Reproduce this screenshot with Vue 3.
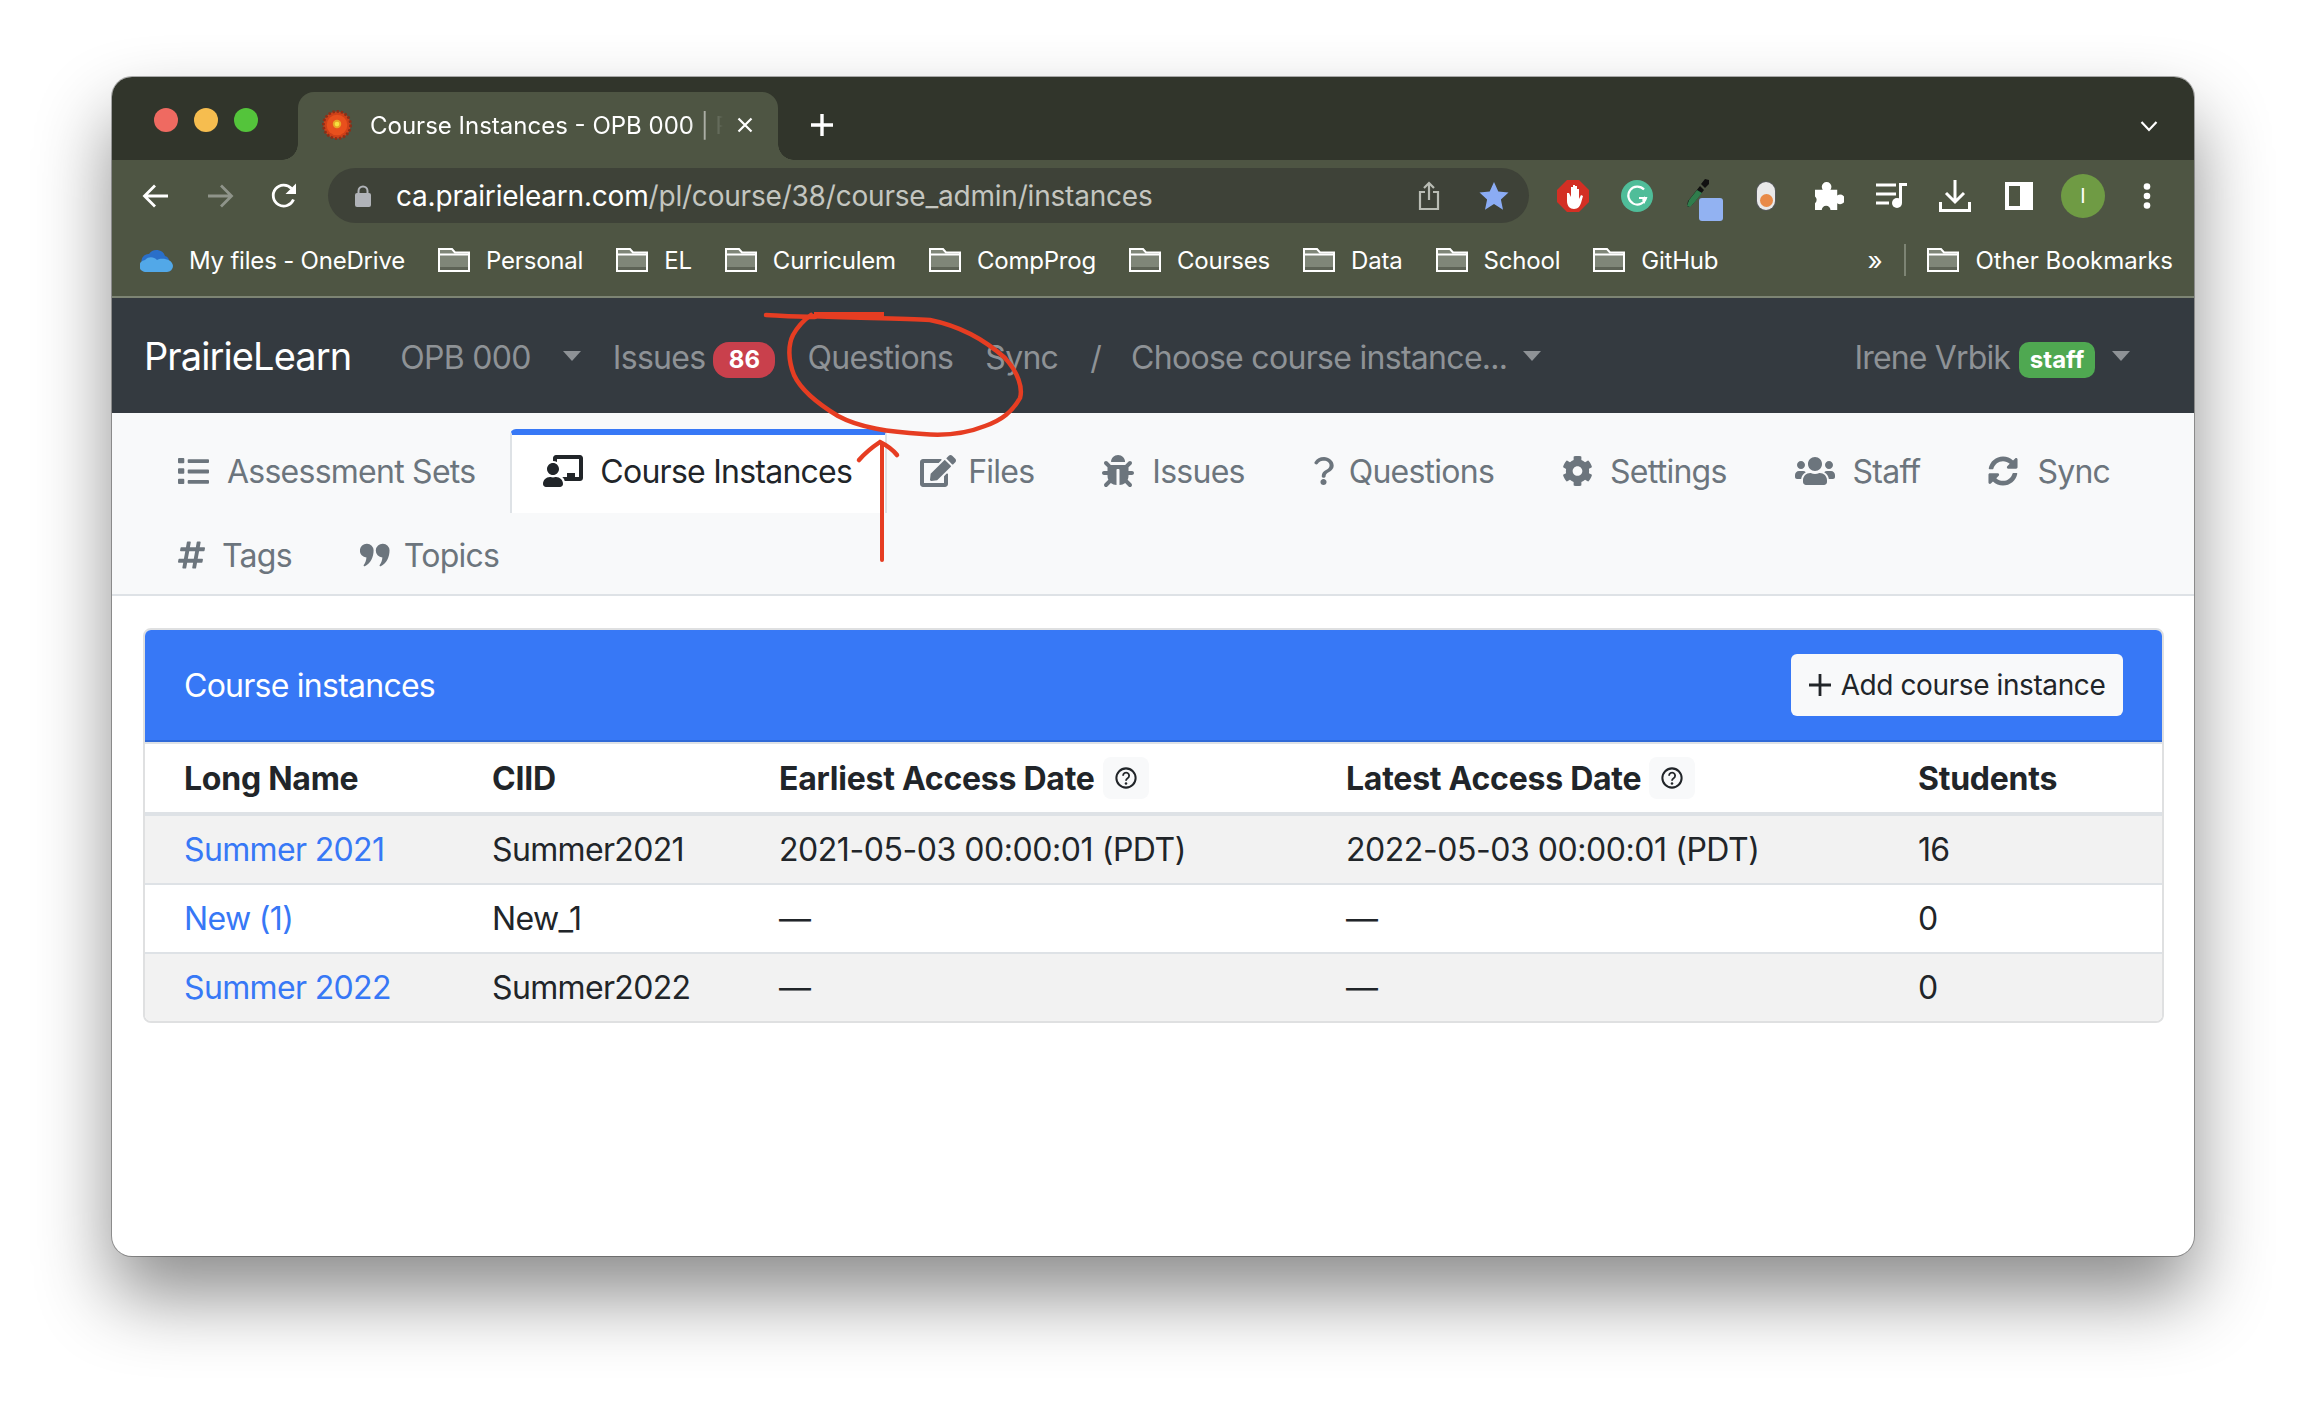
<script setup>
const icons = {
  list: { vb: '0 0 512 512', d: 'M16 40h72a16 16 0 0 1 16 16v56a16 16 0 0 1-16 16H16a16 16 0 0 1-16-16V56a16 16 0 0 1 16-16zm0 172h72a16 16 0 0 1 16 16v56a16 16 0 0 1-16 16H16a16 16 0 0 1-16-16v-56a16 16 0 0 1 16-16zm0 172h72a16 16 0 0 1 16 16v56a16 16 0 0 1-16 16H16a16 16 0 0 1-16-16v-56a16 16 0 0 1 16-16zM176 60h320a16 16 0 0 1 16 16v32a16 16 0 0 1-16 16H176a16 16 0 0 1-16-16V76a16 16 0 0 1 16-16zm0 172h320a16 16 0 0 1 16 16v32a16 16 0 0 1-16 16H176a16 16 0 0 1-16-16v-32a16 16 0 0 1 16-16zm0 172h320a16 16 0 0 1 16 16v32a16 16 0 0 1-16 16H176a16 16 0 0 1-16-16v-32a16 16 0 0 1 16-16z' },
  teacher: { vb: '0 0 640 512', d: 'M208 352c-2.39 0-4.78.35-7.06 1.09C187.98 357.3 174.35 360 160 360c-14.35 0-27.98-2.7-40.95-6.91-2.28-.74-4.66-1.09-7.05-1.09C49.94 352-.33 402.48 0 464.62.14 490.88 21.73 512 48 512h224c26.27 0 47.86-21.12 48-47.38.33-62.14-49.94-112.62-112-112.62zm-48-32c53.02 0 96-42.98 96-96s-42.98-96-96-96-96 42.98-96 96 42.98 96 96 96zM592 0H208c-26.47 0-48 22.25-48 49.59V96c23.42 0 45.1 6.78 64 17.8V64h352v288h-64v-64H384v64h-76.24c19.1 16.69 33.12 38.73 39.69 64H592c26.47 0 48-22.25 48-49.59V49.59C640 22.25 618.47 0 592 0z' },
  edit: { vb: '0 0 576 512', d: 'M402.6 83.2l90.2 90.2c3.8 3.8 3.8 10 0 13.8L274.4 405.6l-92.8 10.3c-12.4 1.4-22.9-9.1-21.5-21.5l10.3-92.8L388.8 83.2c3.8-3.8 10-3.8 13.8 0zm162-22.9l-48.8-48.8c-15.2-15.2-39.9-15.2-55.2 0l-35.4 35.4c-3.8 3.8-3.8 10 0 13.8l90.2 90.2c3.8 3.8 10 3.8 13.8 0l35.4-35.4c15.2-15.3 15.2-40 0-55.2zM384 346.2V448H64V128h229.8c3.2 0 6.2-1.3 8.5-3.5l40-40c7.6-7.6 2.2-20.5-8.5-20.5H48C21.5 64 0 85.5 0 112v352c0 26.5 21.5 48 48 48h352c26.5 0 48-21.5 48-48V306.2c0-10.7-12.9-16-20.5-8.5l-40 40c-2.2 2.3-3.5 5.3-3.5 8.5z' },
  bug: { vb: '0 0 512 512', d: 'M511.988 288.9c-.478 17.43-15.217 31.1-32.653 31.1H424v16c0 21.864-4.882 42.584-13.6 61.145l60.228 60.228c12.496 12.497 12.496 32.758 0 45.255-12.498 12.497-32.759 12.496-45.256 0l-54.736-54.736C345.886 467.965 314.351 480 280 480V236c0-6.627-5.373-12-12-12h-24c-6.627 0-12 5.373-12 12v244c-34.351 0-65.886-12.035-90.636-32.108l-54.736 54.736c-12.498 12.497-32.759 12.496-45.256 0-12.496-12.497-12.496-32.758 0-45.255l60.228-60.228C92.882 378.584 88 357.864 88 336v-16H32.666C15.23 320 .491 306.33.013 288.9-.484 270.816 14.028 256 32 256h56v-58.745l-46.628-46.628c-12.496-12.497-12.496-32.758 0-45.255 12.498-12.497 32.758-12.497 45.256 0L141.255 160h229.489l54.627-54.627c12.498-12.497 32.758-12.497 45.256 0 12.496 12.497 12.496 32.758 0 45.255L424 197.255V256h56c17.972 0 32.484 14.816 31.988 32.9zM257 0c-61.856 0-112 50.144-112 112h224C369 50.144 318.856 0 257 0z' },
  question: { vb: '0 0 384 512', d: 'M202 0C122 0 70 33 30 91c-7 11-5 25 5 33l14 10c10 8 25 6 33-4 25-31 48-60 120-60 56 0 101 32 101 84 0 42-30 62-66 84-42 25-77 50-77 110v6c0 13 11 24 24 24h22c13 0 24-11 24-24v-4c0-36 22-50 56-72 42-26 92-58 92-124C378 66 287 0 202 0zM192 400c-31 0-56 25-56 56s25 56 56 56 56-25 56-56-25-56-56-56z' },
  cog: { vb: '0 0 512 512', d: 'M487.4 315.7l-42.6-24.6c4.3-23.2 4.3-47 0-70.2l42.6-24.6c4.9-2.8 7.1-8.6 5.5-14-11.1-35.6-30-67.8-54.7-94.6-3.8-4.1-10-5.1-14.8-2.3L380.8 110c-17.9-15.4-38.5-27.3-60.8-35.1V25.8c0-5.6-3.9-10.5-9.4-11.7-36.7-8.2-74.3-7.8-109.2 0-5.5 1.2-9.4 6.1-9.4 11.7V75c-22.2 7.9-42.8 19.8-60.8 35.1L88.7 85.5c-4.9-2.8-11-1.9-14.8 2.3-24.7 26.7-43.6 58.9-54.7 94.6-1.7 5.4.6 11.2 5.5 14L67.3 221c-4.3 23.2-4.3 47 0 70.2l-42.6 24.6c-4.9 2.8-7.1 8.6-5.5 14 11.1 35.6 30 67.8 54.7 94.6 3.8 4.1 10 5.1 14.8 2.3l42.6-24.6c17.9 15.4 38.5 27.3 60.8 35.1v49.2c0 5.6 3.9 10.5 9.4 11.7 36.7 8.2 74.3 7.8 109.2 0 5.5-1.2 9.4-6.1 9.4-11.7v-49.2c22.2-7.9 42.8-19.8 60.8-35.1l42.6 24.6c4.9 2.8 11 1.9 14.8-2.3 24.7-26.7 43.6-58.9 54.7-94.6 1.5-5.5-.7-11.3-5.6-14.1zM256 336c-44.1 0-80-35.9-80-80s35.9-80 80-80 80 35.9 80 80-35.9 80-80 80z' },
  users: { vb: '0 0 640 512', d: 'M96 224c35.3 0 64-28.7 64-64s-28.7-64-64-64-64 28.7-64 64 28.7 64 64 64zm448 0c35.3 0 64-28.7 64-64s-28.7-64-64-64-64 28.7-64 64 28.7 64 64 64zm32 32h-64c-17.6 0-33.5 7.1-45.1 18.6 40.3 22.1 68.9 62 75.1 109.4h66c17.7 0 32-14.3 32-32v-32c0-35.3-28.7-64-64-64zm-256 0c61.9 0 112-50.1 112-112S381.9 32 320 32 208 82.1 208 144s50.1 112 112 112zm76.8 32h-8.3c-20.8 10-43.9 16-68.5 16s-47.6-6-68.5-16h-8.3C179.6 288 128 339.6 128 403.2V432c0 26.5 21.5 48 48 48h288c26.5 0 48-21.5 48-48v-28.8c0-63.6-51.6-115.2-115.2-115.2zm-223.7-13.4C161.5 263.1 145.6 256 128 256H64c-35.3 0-64 28.7-64 64v32c0 17.7 14.3 32 32 32h65.9c6.3-47.4 34.9-87.3 75.2-109.4z' },
  sync: { vb: '0 0 512 512', d: 'M370.72 133.28C339.458 104.008 298.888 87.962 255.848 88c-77.458.068-144.328 53.178-162.791 126.85-1.344 5.363-6.122 9.15-11.651 9.15H24.103c-7.498 0-13.194-6.807-11.807-14.176C33.933 94.924 134.813 8 256 8c66.448 0 126.791 26.136 171.315 68.685L463.03 40.97C478.149 25.851 504 36.559 504 57.941V192c0 13.255-10.745 24-24 24H345.941c-21.382 0-32.09-25.851-16.971-40.971l41.75-41.749zM32 296h134.059c21.382 0 32.09 25.851 16.971 40.971l-41.75 41.75c31.262 29.273 71.835 45.319 114.876 45.28 77.418-.07 144.315-53.144 162.787-126.849 1.344-5.363 6.122-9.15 11.651-9.15h57.304c7.498 0 13.194 6.807 11.807 14.176C478.067 417.076 377.187 504 256 504c-66.448 0-126.791-26.136-171.315-68.685L48.97 471.03C33.851 486.149 8 475.441 8 454.059V320c0-13.255 10.745-24 24-24z' },
  hash: { vb: '0 0 448 512', d: 'M440.667 182.109l7.143-40c1.313-7.355-4.342-14.109-11.813-14.109h-74.81l14.623-81.891C377.123 38.754 371.468 32 363.997 32h-40.632a12 12 0 0 0-11.813 9.891L296.175 128H197.54l14.623-81.891C213.477 38.754 207.822 32 200.35 32h-40.632a12 12 0 0 0-11.813 9.891L132.528 128H53.432a12 12 0 0 0-11.813 9.891l-7.143 40C33.163 185.246 38.818 192 46.289 192h74.81L98.242 320H19.146a12 12 0 0 0-11.813 9.891l-7.143 40C-1.123 377.246 4.532 384 12.003 384h74.81L72.19 465.891C70.877 473.246 76.532 480 84.003 480h40.632a12 12 0 0 0 11.813-9.891L151.826 384h98.634l-14.623 81.891C234.523 473.246 240.178 480 247.65 480h40.632a12 12 0 0 0 11.813-9.891L315.472 384h79.096a12 12 0 0 0 11.813-9.891l7.143-40c1.313-7.355-4.342-14.109-11.813-14.109h-74.81l22.857-128h79.096a12 12 0 0 0 11.813-9.891zM261.889 320h-98.634l22.857-128h98.634l-22.857 128z' },
  quote: { vb: '0 0 512 512', d: 'M120 64a112 112 0 0 1 112 112c0 120-50 220-150 272a14 14 0 0 1-18-20c24-34 42-76 46-130A112 112 0 0 1 120 64zm272 0a112 112 0 0 1 112 112c0 120-50 220-150 272a14 14 0 0 1-18-20c24-34 42-76 46-130a112 112 0 0 1 10-234z' },
}

const tabs = [
  { label: 'Assessment Sets', icon: 'list', w: 31, gap: 18 },
  { label: 'Course Instances', icon: 'teacher', w: 40, gap: 17, active: true },
  { label: 'Files', icon: 'edit', w: 36, gap: 12 },
  { label: 'Issues', icon: 'bug', w: 32, gap: 18 },
  { label: 'Questions', icon: 'question', w: 21, gap: 15 },
  { label: 'Settings', icon: 'cog', w: 31, gap: 17 },
  { label: 'Staff', icon: 'users', w: 40, gap: 18 },
  { label: 'Sync', icon: 'sync', w: 30, gap: 19 },
  { label: 'Tags', icon: 'hash', w: 27, gap: 17 },
  { label: 'Topics', icon: 'quote', w: 30, gap: 14 },
]

const bookmarks = ['Personal', 'EL', 'Curriculem', 'CompProg', 'Courses', 'Data', 'School', 'GitHub']

const rows = [
  { name: 'Summer 2021', ciid: 'Summer2021', early: '2021-05-03 00:00:01 (PDT)', late: '2022-05-03 00:00:01 (PDT)', students: 16 },
  { name: 'New (1)', ciid: 'New_1', early: '—', late: '—', students: 0 },
  { name: 'Summer 2022', ciid: 'Summer2022', early: '—', late: '—', students: 0 },
]
</script>

<template>
  <div class="page">
    <div class="window">
      <div class="tabstrip">
        <div class="lights">
          <span class="light red"></span>
          <span class="light yellow"></span>
          <span class="light green"></span>
        </div>
        <div class="browser-tab">
          <svg class="favicon" viewBox="0 0 32 32" width="30" height="32">
            <circle cx="16" cy="16" r="14.500" fill="#cf4018" stroke="#8a2f18" stroke-width="3" stroke-dasharray="2.500 2" />
            <circle cx="16" cy="16" r="11" fill="#e8501d" />
            <circle cx="16" cy="15" r="4.500" fill="#e8a625" />
            <circle cx="16" cy="15" r="2.500" fill="#f6e23f" />
          </svg>
          <span class="tab-title">Course Instances - OPB 000 | PrairieLearn</span>
          <svg class="tab-close" viewBox="0 0 16 16" width="16" height="16">
            <path d="M1.500 1.500l13 13M14.500 1.500l-13 13" stroke="#fff" stroke-width="2.200" fill="none" />
          </svg>
        </div>
        <svg class="new-tab" viewBox="0 0 24 24" width="24" height="24">
          <path d="M12 1v22M1 12h22" stroke="#fff" stroke-width="3.400" fill="none" />
        </svg>
        <svg class="tab-menu" viewBox="0 0 18 12" width="18" height="12">
          <path d="M1.500 2l7.500 8 7.500-8" stroke="#fff" stroke-width="2.200" fill="none" />
        </svg>
      </div>

      <div class="toolbar">
        <svg class="tool-nav" viewBox="0 0 28 28" width="28" height="28">
          <path d="M26 14H3M13 3.500L2.500 14 13 24.500" stroke="#fff" stroke-width="2.800" fill="none" />
        </svg>
        <svg class="tool-nav" viewBox="0 0 28 28" width="28" height="28">
          <path d="M2 14h23M15 3.500L25.500 14 15 24.500" stroke="#8f948a" stroke-width="2.800" fill="none" />
        </svg>
        <svg class="tool-nav" viewBox="0 0 28 28" width="28" height="28">
          <path d="M23.500 17.500A10.500 10.500 0 1 1 21.500 6.500" stroke="#fff" stroke-width="2.800" fill="none" />
          <path d="M26 1.500V12H15.500z" fill="#fff" />
        </svg>
        <div class="omnibox">
          <svg class="lock" viewBox="0 0 16 22" width="16" height="22">
            <path d="M3.500 9V6a4.500 4.500 0 0 1 9 0v3" stroke="#b0b3b8" stroke-width="2" fill="none" />
            <rect x="0" y="8" width="16" height="14" rx="2" fill="#b0b3b8" />
          </svg>
          <span class="url"><span class="url-host">ca.prairielearn.com</span>/pl/course/38/course_admin/instances</span>
          <svg class="share" viewBox="0 0 22 30" width="22" height="30">
            <path d="M11 19V2M6 7l5-5 5 5M7 11H2v17h18V11h-5" stroke="#b9bcb4" stroke-width="2.200" fill="none" />
          </svg>
          <svg class="star" viewBox="0 0 30 30" width="30" height="30">
            <path d="M15 1l4.300 9.500 10.200 1.100-7.600 6.900 2.100 10.200L15 23l-9 5.700 2.100-10.200L.5 11.600l10.200-1.100z" fill="#8bacf4" />
          </svg>
        </div>
        <div class="extensions">
          <svg viewBox="0 0 32 32" width="32" height="32">
            <path d="M10 0h12l10 10v12L22 32H10L0 22V10z" fill="#d32f24" />
            <path d="M10 13v8c0 5 3 8 7 8s6-3 7-6l2-7-2-1-2 4V9h-2v6V6h-2v9V5h-2v10V7h-2v10l-2-4z" fill="#fff" />
          </svg>
          <svg viewBox="0 0 32 32" width="32" height="32">
            <circle cx="16" cy="16" r="16" fill="#4fbd99" />
            <path d="M23 9.500A9 9 0 1 0 25 18h-7" stroke="#fff" stroke-width="2.200" fill="none" />
            <path d="M24 16v8l-3-4z" fill="#fff" />
          </svg>
          <div class="picker">
            <svg viewBox="0 0 26 30" width="26" height="30">
              <path d="M24 1l-4-1-4 5 4 4 4-4zM15 7L3 22l-1 5 2 1 4-3L19 11z" fill="#111" />
              <path d="M12 11L4 21l-2 6 3 1 4-4 8-10z" fill="#2f7d4c" />
            </svg>
            <span class="picker-swatch"></span>
          </div>
          <span class="toggle"><span class="toggle-dot"></span></span>
          <svg class="puzzle" viewBox="0 0 30 29" width="29" height="28">
            <path d="M0 8h8a5 5 0 0 1-1-3 5 5 0 0 1 10 0 5 5 0 0 1-1 3h7v6a5 5 0 0 1 3-1 5 5 0 0 1 0 10 5 5 0 0 1-3-1v7h-7a4.500 4.500 0 0 0-9 0H0v-7a4.500 4.500 0 0 0 0-7z" fill="#fff" />
          </svg>
          <svg viewBox="0 0 31 25" width="31" height="25">
            <path d="M0 2h20M0 11h20M0 20h13" stroke="#fff" stroke-width="3" fill="none" />
            <path d="M24.500 20V1.500h6.500" stroke="#fff" stroke-width="3" fill="none" />
            <ellipse cx="21" cy="20" rx="5" ry="5" fill="#fff" />
          </svg>
          <svg class="download" viewBox="0 0 32 32" width="32" height="32">
            <path d="M16 0v22M7 13l9 9 9-9M1.500 22v8.500h29V22" stroke="#fff" stroke-width="3" fill="none" />
          </svg>
          <svg class="panel" viewBox="0 0 28 28" width="28" height="28">
            <rect x="2" y="2" width="24" height="24" fill="none" stroke="#fff" stroke-width="4" />
            <rect x="15" y="2" width="11" height="24" fill="#fff" />
          </svg>
          <span class="avatar">I</span>
          <svg class="dots" viewBox="0 0 8 26" width="8" height="26">
            <circle cx="4" cy="3.500" r="3.300" fill="#fff" />
            <circle cx="4" cy="13" r="3.300" fill="#fff" />
            <circle cx="4" cy="22.500" r="3.300" fill="#fff" />
          </svg>
        </div>
      </div>

      <div class="bookmarks">
        <div class="bookmark">
          <svg viewBox="0 0 33 24" width="33" height="24">
            <path d="M8 20a7 7 0 0 1 1-14 9 9 0 0 1 16 2 5 5 0 0 1-2 10z" fill="#2a6fc9" />
            <path d="M6 24a6 6 0 0 1-1-12c4-4 9-3 12 0 4-3 16-1 16 6a6 6 0 0 1-6 6z" fill="#52a8e8" />
          </svg>
          <span>My files - OneDrive</span>
        </div>
        <div v-for="b in bookmarks" :key="b" class="bookmark">
          <svg class="folder" viewBox="0 0 32 24" width="32" height="24">
            <path d="M1 23V1h13l3 3.500h14V23z" fill="#7f8678" stroke="#fff" stroke-width="2" />
            <path d="M2 6.500h28" stroke="#fff" stroke-width="2" />
            <path d="M2 19h28v3H2z" fill="#5d6356" />
          </svg>
          <span>{{ b }}</span>
        </div>
        <span class="chevrons">»</span>
        <span class="bm-sep"></span>
        <div class="bookmark">
          <svg class="folder" viewBox="0 0 32 24" width="32" height="24">
            <path d="M1 23V1h13l3 3.500h14V23z" fill="#7f8678" stroke="#fff" stroke-width="2" />
            <path d="M2 6.500h28" stroke="#fff" stroke-width="2" />
            <path d="M2 19h28v3H2z" fill="#5d6356" />
          </svg>
          <span>Other Bookmarks</span>
        </div>
      </div>

      <nav class="navbar">
        <span class="brand">PrairieLearn</span>
        <span class="nav-item course">OPB 000</span>
        <span class="caret caret-course"></span>
        <span class="nav-item issues">Issues</span>
        <span class="badge danger">86</span>
        <span class="nav-item questions">Questions</span>
        <span class="nav-item sync">Sync</span>
        <span class="nav-item slash">/</span>
        <span class="nav-item choose">Choose course instance...</span>
        <span class="caret caret-choose"></span>
        <div class="nav-right">
          <span class="nav-item">Irene Vrbik</span>
          <span class="badge success">staff</span>
          <span class="caret caret-user"></span>
        </div>
      </nav>

      <div class="subtabs">
        <a v-for="t in tabs" :key="t.label" class="subtab" :class="{ active: t.active }">
          <svg class="subtab-icon" :viewBox="icons[t.icon].vb" :width="t.w" :height="32" :style="{ marginRight: t.gap + 'px' }">
            <path :d="icons[t.icon].d" fill="currentColor" />
          </svg>
          <span>{{ t.label }}</span>
        </a>
      </div>

      <main class="content">
        <section class="card">
          <header class="card-header">
            <span class="card-title">Course instances</span>
            <button class="add-btn">
              <svg viewBox="0 0 22 22" width="22" height="22">
                <path d="M11 0v22M0 11h22" stroke="#212529" stroke-width="2.800" fill="none" />
              </svg>
              <span>Add course instance</span>
            </button>
          </header>
          <table class="table">
            <colgroup>
              <col class="c1" /><col class="c2" /><col class="c3" /><col class="c4" /><col />
            </colgroup>
            <thead>
              <tr>
                <th>Long Name</th>
                <th>CIID</th>
                <th>
                  <span class="th-flex">Earliest Access Date
                    <span class="help"><svg viewBox="0 0 24 24" width="22" height="22"><circle cx="12" cy="12" r="10.500" fill="none" stroke="#212529" stroke-width="2.200" /><path d="M8.800 9.500a3.300 3.300 0 1 1 5 2.800c-1.200.8-1.800 1.400-1.800 2.700" fill="none" stroke="#212529" stroke-width="2" /><circle cx="12" cy="18" r="1.400" fill="#212529" /></svg></span>
                  </span>
                </th>
                <th>
                  <span class="th-flex">Latest Access Date
                    <span class="help"><svg viewBox="0 0 24 24" width="22" height="22"><circle cx="12" cy="12" r="10.500" fill="none" stroke="#212529" stroke-width="2.200" /><path d="M8.800 9.500a3.300 3.300 0 1 1 5 2.800c-1.200.8-1.800 1.400-1.800 2.700" fill="none" stroke="#212529" stroke-width="2" /><circle cx="12" cy="18" r="1.400" fill="#212529" /></svg></span>
                  </span>
                </th>
                <th>Students</th>
              </tr>
            </thead>
            <tbody>
              <tr v-for="r in rows" :key="r.name">
                <td><a class="link">{{ r.name }}</a></td>
                <td>{{ r.ciid }}</td>
                <td class="date">{{ r.early }}</td>
                <td class="date">{{ r.late }}</td>
                <td>{{ r.students }}</td>
              </tr>
            </tbody>
          </table>
        </section>
      </main>
    </div>

    <svg class="annotation" viewBox="0 0 2306 1404" width="2306" height="1404">
      <path d="M810 316C850 318 900 318 930 320C960 326 985 340 1005 358C1018 372 1023 388 1020 398C1012 412 1002 420 985 426C965 434 945 436 923 434C890 432 860 428 838 416C815 402 800 388 794 375C788 360 788 345 793 335C798 326 804 320 811 315" fill="none" stroke="#e63d22" stroke-width="4.500" stroke-linecap="round" />
      <path d="M766 315C785 316 800 317 815 317" stroke="#e63d22" stroke-width="4.500" fill="none" stroke-linecap="round" />
      <path d="M814 315L884 315" stroke="#e63d22" stroke-width="6" fill="none" />
      <path d="M882 560V444" stroke="#e63d22" stroke-width="4" fill="none" stroke-linecap="round" />
      <path d="M859 460C866 452 874 446 880 442C888 446 893 450 897 455" stroke="#e63d22" stroke-width="4.500" fill="none" stroke-linecap="round" />
    </svg>
  </div>
</template>

<style>
html, body { margin: 0; background: #fff; }
</style>

<style scoped>
.page {
  position: relative;
  width: 2306px;
  height: 1404px;
  box-sizing: border-box;
  padding: 77px 112px 148px;
  background: #fff;
  overflow: hidden;
  font-family: Inter, "Liberation Sans", sans-serif;
}
.window {
  height: 100%;
  display: flex;
  flex-direction: column;
  background: #fff;
  border-radius: 20px;
  overflow: hidden;
  box-shadow: 0 0 0 1px rgba(0, 0, 0, .3), 0 40px 75px rgba(0, 0, 0, .45);
}

.tabstrip {
  flex: none;
  height: 83px;
  background: #31352b;
  display: flex;
  align-items: flex-start;
  position: relative;
}
.lights { display: flex; gap: 16px; padding: 31px 0 0 42px; width: 186px; box-sizing: border-box; }
.light { width: 24px; height: 24px; border-radius: 50%; flex: none; }
.red { background: #ef6a61; }
.yellow { background: #f6bd4f; }
.green { background: #54c43b; }
.browser-tab {
  position: relative;
  margin-top: 15px;
  width: 480px;
  height: 68px;
  background: #4e5543;
  border-radius: 16px 16px 0 0;
  display: flex;
  align-items: center;
  padding: 0 25px 2px 24px;
  box-sizing: border-box;
}
.browser-tab::before,
.browser-tab::after {
  content: "";
  position: absolute;
  bottom: 0;
  width: 16px;
  height: 16px;
}
.browser-tab::before { left: -16px; background: radial-gradient(circle at 0 0, #31352b 15.5px, #4e5543 16px); }
.browser-tab::after { right: -16px; background: radial-gradient(circle at 100% 0, #31352b 15.5px, #4e5543 16px); }
.favicon { flex: none; margin-right: 18px; }
.tab-title {
  flex: 1;
  min-width: 0;
  white-space: nowrap;
  overflow: hidden;
  color: #fff;
  font-size: 24px;
  -webkit-mask-image: linear-gradient(90deg, #000 90%, transparent 100%);
  mask-image: linear-gradient(90deg, #000 90%, transparent 100%);
}
.tab-close { flex: none; margin-left: 14px; }
.new-tab { margin: 36px 0 0 32px; flex: none; }
.tab-menu { margin: 43px 36px 0 auto; flex: none; }

.toolbar {
  flex: none;
  height: 73px;
  box-sizing: border-box;
  padding: 8px 0 0 30px;
  background: #4e5543;
  display: flex;
  align-items: flex-start;
}
.tool-nav { flex: none; margin: 14px 36px 0 0; }
.omnibox {
  margin-left: -6px;
  width: 1201px;
  height: 55px;
  flex: none;
  border-radius: 28px;
  background: #3e4238;
  display: flex;
  align-items: center;
  padding: 0 20px 0 27px;
  box-sizing: border-box;
}
.lock { flex: none; margin-right: 25px; }
.url { flex: 1; color: #c4c6c0; font-size: 28px; white-space: nowrap; letter-spacing: -.2px; }
.url-host { color: #fff; }
.share { flex: none; margin-right: 39px; }
.star { flex: none; }
.extensions {
  display: flex;
  align-items: center;
  margin: 0 0 0 28px;
  height: 55px;
  gap: 32px;
  flex: none;
}
.extensions > svg { flex: none; }
.picker { position: relative; width: 38px; height: 30px; margin-bottom: 3px; }
.picker svg { display: block; }
.picker-swatch {
  position: absolute;
  right: 0;
  top: 19px;
  width: 24px;
  height: 23px;
  border-radius: 3px;
  background: #92b2f2;
}
.toggle {
  width: 18px;
  height: 28px;
  border-radius: 9px;
  background: #e9e9e9;
  box-shadow: 0 0 0 1px #55585a;
  display: flex;
  align-items: flex-end;
  justify-content: center;
  padding-bottom: 3px;
  box-sizing: border-box;
  margin-left: 2px;
  flex: none;
}
.toggle-dot { width: 13px; height: 13px; border-radius: 50%; background: #e88a48; }
.puzzle { margin-left: 8px; }
.panel { margin-left: 2px; }
.avatar {
  width: 44px;
  height: 44px;
  border-radius: 50%;
  background: #6f9b44;
  color: #fff;
  font-size: 20px;
  display: flex;
  align-items: center;
  justify-content: center;
  flex: none;
  margin-left: -4px;
}
.dots { margin-left: 6px; }

.bookmarks {
  flex: none;
  height: 65px;
  box-sizing: border-box;
  background: #4e5543;
  border-bottom: 2px solid #7d8474;
  padding: 0 0 9px 28px;
  display: flex;
  align-items: center;
  gap: 33px;
  color: #fff;
  font-size: 24px;
  letter-spacing: -.2px;
  white-space: nowrap;
}
.bookmark { display: flex; align-items: center; gap: 16px; flex: none; }
.folder { flex: none; }
.chevrons { margin-left: auto; font-size: 26px; }
.bm-sep { width: 2px; height: 32px; background: #7d8474; margin: 0 -12px 0 -11px; }
.bookmark:last-child { margin-right: 21px; letter-spacing: 0; }

.navbar {
  flex: none;
  height: 115px;
  box-sizing: border-box;
  background: #343a40;
  padding: 4px 64px 0 32px;
  display: flex;
  align-items: center;
  white-space: nowrap;
  letter-spacing: -.7px;
}
.brand { color: #fff; font-size: 38px; letter-spacing: -.9px; margin-right: 49px; margin-bottom: 4px; }
.nav-item { color: #8e9296; font-size: 32px; }
.caret {
  width: 0;
  height: 0;
  border-left: 9px solid transparent;
  border-right: 9px solid transparent;
  border-top: 10px solid #8e9296;
  flex: none;
  margin-bottom: 4px;
}
.caret-course { margin-left: 32px; margin-right: 32px; }
.badge {
  display: inline-block;
  color: #fff;
  font-weight: 700;
  border-radius: 10px;
  height: 36px;
  line-height: 36px;
  font-size: 24px;
  letter-spacing: 0;
  text-align: center;
  flex: none;
  margin-top: 5px;
}
.danger { background: #c9404c; width: 62px; margin-left: 8px; border-radius: 16px; }
.success { background: #4fa851; width: 76px; margin-left: 9px; }
.questions { margin-left: 32px; }
.sync { margin-left: 32px; }
.slash { margin-left: 32px; }
.choose { margin-left: 30px; }
.caret-choose { margin-left: 16px; }
.nav-right { margin-left: auto; display: flex; align-items: center; letter-spacing: -.85px; }
.caret-user { margin-left: 17px; }

.subtabs {
  flex: none;
  background: #f8f9fa;
  border-bottom: 2px solid #dee2e6;
  padding: 16px 33px 0;
  height: 183px;
  box-sizing: border-box;
  display: flex;
  flex-wrap: wrap;
  align-content: flex-start;
}
.subtab {
  height: 84px;
  box-sizing: border-box;
  padding: 0 33px 6px;
  display: flex;
  align-items: center;
  color: #6c757d;
  font-size: 32px;
  letter-spacing: -.75px;
  white-space: nowrap;
  border: 0 solid transparent;
  border-width: 6px 2px 0 0;
}
.subtab-icon { flex: none; }
.subtab.active {
  background: #fff;
  color: #212529;
  border-top-color: #3778f6;
  border-left: 2px solid #dee2e6;
  border-right-color: #dee2e6;
  border-radius: 6px 6px 0 0;
  padding-left: 31px;
}

.content { flex: 1; padding: 32px 30px 0 31px; }
.card {
  border: 2px solid #dfe0e1;
  border-radius: 8px;
  overflow: hidden;
}
.card-header {
  height: 112px;
  box-sizing: border-box;
  background: #3778f6;
  border-bottom: 2px solid #2f69d8;
  display: flex;
  align-items: center;
  justify-content: space-between;
  padding: 0 39px;
}
.card-title { color: #fff; font-size: 32px; letter-spacing: -.75px; }
.add-btn {
  width: 332px;
  height: 62px;
  border: 0;
  border-radius: 6px;
  background: #f8f9fa;
  color: #212529;
  font: inherit;
  font-size: 28px;
  letter-spacing: -.4px;
  display: flex;
  align-items: center;
  justify-content: center;
  gap: 10px;
  white-space: nowrap;
  padding: 0;
}
.add-btn svg { flex: none; }
.table {
  width: 100%;
  border-collapse: collapse;
  table-layout: fixed;
  font-size: 32px;
  letter-spacing: -.65px;
  color: #212529;
  border-top: 2px solid #dee2e6;
}
.c1 { width: 347px; }
.c2 { width: 287px; }
.c3 { width: 567px; }
.c4 { width: 572px; }
th, td { text-align: left; padding: 0; white-space: nowrap; }
th:first-child, td:first-child { padding-left: 39px; }
th {
  height: 68px;
  font-weight: 700;
  letter-spacing: -.25px;
  border-bottom: 4px solid #dee2e6;
}
td { height: 67px; border-bottom: 2px solid #dee2e6; }
td.date { letter-spacing: -.45px; }
tbody tr:last-child td { border-bottom: 0; }
tbody tr:nth-child(odd) { background: #f2f2f2; }
.th-flex { display: flex; align-items: center; }
.help {
  width: 46px;
  height: 42px;
  margin-left: 8px;
  border-radius: 8px;
  background: #f8f9fa;
  display: flex;
  align-items: center;
  justify-content: center;
}
.link { color: #3778f6; }

.annotation { position: absolute; left: 0; top: 0; pointer-events: none; }
</style>
